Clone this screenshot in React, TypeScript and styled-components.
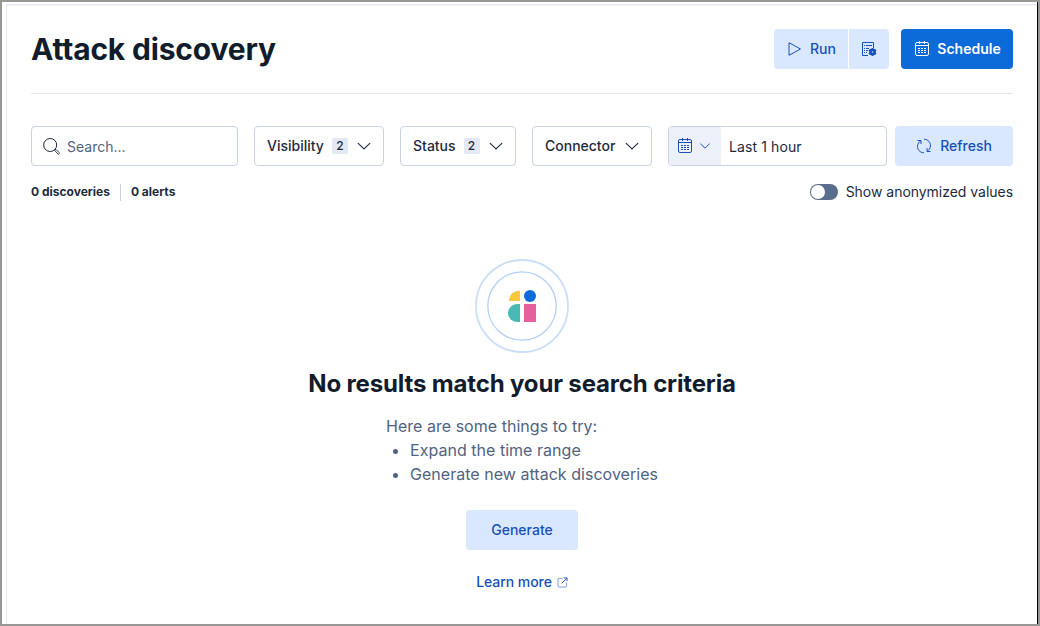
import React from 'react';
import styled, { createGlobalStyle, css } from 'styled-components';

const GlobalStyle = createGlobalStyle`
  * { box-sizing: border-box; }
  body { margin: 0; font-family: Inter, 'Liberation Sans', sans-serif; color: #1d2a3e; background: #fff; }
  button { font-family: inherit; cursor: pointer; }
  svg { display: block; flex: none; }
`;

const Frame = styled.div`
  width: 1040px;
  height: 626px;
  padding: 2px 0 0 4px;
  border: 2px solid #999795;
  background: #fff;
  box-shadow: inset -1px 0 0 #000;
  overflow: hidden;
`;

const Page = styled.main`
  height: 100%;
  margin-right: 1px;
  padding: 24px 24px 0;
  border-top: 1px solid #e3e8f2;
  border-left: 1px solid #e3e8f2;
  box-shadow: inset 0 1px 1px #f3f5fa;
`;

const Header = styled.header`
  display: flex;
  align-items: center;
  justify-content: space-between;
  height: 65px;
  padding-bottom: 24px;
  border-bottom: 1px solid #e3e8f2;
`;

const Title = styled.h1`
  margin: 0;
  font-size: 30px;
  line-height: 40px;
  font-weight: 700;
  letter-spacing: -0.17px;
  color: #111c2c;
`;

const Actions = styled.div`
  display: flex;
  gap: 12px;
`;

const SplitButton = styled.div`
  display: flex;
  gap: 1px;
  border-radius: 4px;
  overflow: hidden;
`;

const Button = styled.button<{ $width: number; $primary?: boolean; $square?: boolean }>`
  display: flex;
  align-items: center;
  justify-content: center;
  gap: 8px;
  width: ${p => p.$width}px;
  height: 40px;
  padding: 0;
  border: 0;
  border-radius: ${p => (p.$square ? 0 : 4)}px;
  font-size: 14px;
  font-weight: 500;
  color: ${p => (p.$primary ? '#fff' : '#1750ba')};
  background: ${p => (p.$primary ? '#0c6ad9' : '#d9e8ff')};
  ${p => p.$primary && css`
    gap: 7px;
    padding-left: 1px;
    font-weight: 600;
  `}
`;

const ButtonText = styled.span`
  padding-bottom: 2px;
`;

const Filters = styled.div`
  display: flex;
  margin-top: 32px;
`;

const field = css`
  display: flex;
  align-items: center;
  height: 40px;
  border: 1px solid #cad3e2;
  border-radius: 4px;
  background: #fff;
  font-size: 14px;
`;

const SearchField = styled.label`
  ${field}
  width: 207px;
  margin-right: 16px;
  padding: 0 0 0 11px;
  gap: 7px;
  color: #516381;
`;

const FilterButton = styled.button<{ $width: number }>`
  ${field}
  width: ${p => p.$width}px;
  margin-right: 16px;
  padding: 0 11px 0 12px;
  font-weight: 500;
  color: #1d2a3e;
`;

const Badge = styled.span`
  width: 16px;
  height: 16px;
  margin-left: 8px;
  border-radius: 2px;
  background: #e3e8f2;
  font-size: 12px;
  line-height: 16px;
  text-align: center;
`;

const ChevronSlot = styled.span`
  margin-left: auto;
`;

const DateField = styled.div`
  ${field}
  width: 219px;
  margin-right: 8px;
  overflow: hidden;
`;

const DateToggle = styled.span`
  display: flex;
  align-items: center;
  gap: 6px;
  width: 52px;
  height: 100%;
  padding-left: 8px;
  color: #1750ba;
  background: #ecf1f9;
`;

const DateText = styled.span`
  padding-left: 8px;
  letter-spacing: 0.1px;
`;

const Summary = styled.div`
  display: flex;
  align-items: center;
  justify-content: space-between;
  height: 20px;
  margin-top: 16px;
`;

const Counts = styled.div`
  display: flex;
  align-items: center;
  font-size: 12px;
  font-weight: 700;
`;

const CountText = styled.span`
  padding-bottom: 2px;
`;

const AlertCount = styled.span`
  margin-left: 10px;
  padding-left: 10px;
  border-left: 1px solid #cad3e2;
  height: 17px;
  line-height: 15px;
`;

const SwitchLabel = styled.label`
  display: flex;
  align-items: center;
  gap: 8px;
  font-size: 14px;
  letter-spacing: -0.03px;
`;

const Switch = styled.span`
  width: 28px;
  height: 16px;
  padding: 1px;
  border-radius: 8px;
  background: #5a6d8c;
  &::after {
    content: '';
    display: block;
    width: 14px;
    height: 14px;
    border-radius: 50%;
    background: #fff;
  }
`;

const Empty = styled.section`
  display: flex;
  flex-direction: column;
  align-items: center;
  margin-top: 57px;
`;

const EmptyTitle = styled.h2`
  margin: 15px 0 0;
  font-size: 24px;
  line-height: 32px;
  font-weight: 700;
  letter-spacing: -0.15px;
  color: #111c2c;
`;

const Hints = styled.div`
  width: 272px;
  margin-top: 14px;
  font-size: 16px;
  line-height: 24px;
  letter-spacing: 0.03px;
  color: #516381;
  white-space: nowrap;
`;

const HintList = styled.ul`
  margin: 0;
  padding-left: 24px;
`;

const GenerateSlot = styled.div`
  margin-top: 24px;
`;

const LearnMore = styled.a`
  display: flex;
  align-items: center;
  gap: 5px;
  margin-top: 22px;
  font-size: 14px;
  line-height: 20px;
  font-weight: 500;
  letter-spacing: -0.05px;
  color: #1750ba;
`;

const iconProps = { width: 16, height: 16, viewBox: '0 0 16 16', fill: 'none', stroke: 'currentColor' };

const PlayIcon = () => (
  <svg {...iconProps}><path d="M3 1.7v12.600L14.500 8z" strokeLinejoin="round" /></svg>
);

const CalendarIcon = () => (
  <svg {...iconProps}>
    <rect x="1.5" y="1.5" width="13" height="13" rx="1.5" />
    <path d="M1.5 4.5h13M5.5 0v3M10.5 0v3" />
    <path d="M4 7.5h2M7 7.5h2M10 7.5h2M4 9.5h2M7 9.5h2M10 9.5h2M4 11.5h2M7 11.5h2M10 11.5h2" />
  </svg>
);

const ListGearIcon = () => (
  <svg {...iconProps}>
    <path d="M7 14.5H1.5v-13h11V7" />
    <path d="M3 4.5h1M5 4.5h6M3 7.5h1M5 7.5h3M3 9.5h1M5 9.5h2M3 11.5h1M5 11.5h1" />
    <circle cx="11.5" cy="11" r="2.1" strokeWidth="2.6" />
    <path d="M11.5 7v1.5M11.5 13.5V15M8 9l1.3.8M13.7 12.2l1.3.8M8 13l1.3-.8M13.7 9.8l1.3-.8" strokeWidth="1.7" />
  </svg>
);

const SearchIcon = () => (
  <svg {...iconProps} width="17" height="17" viewBox="0 0 17 17" color="#1d2a3e">
    <circle cx="7.2" cy="7" r="6.5" />
    <path d="m11.9 11.6 1.200-.1 3 3a.9.9 0 0 1-1.300 1.300l-2.900-3.100z" strokeWidth=".9" />
  </svg>
);

const ChevronIcon = ({ size = 16 }: { size?: number }) => (
  <svg {...iconProps} width={size} height={size}><path d="m2.2 5.3 5.8 5.6 5.8-5.6" strokeWidth={size < 16 ? 1.3 : 1.1} strokeLinecap="round" strokeLinejoin="round" /></svg>
);

const RefreshIcon = () => (
  <svg {...iconProps}>
    <path d="M1.5 2.500H5V6M5 2.500C.8 5.200.1 11 4.500 13.800q1.600 1 3.500 1" />
    <path d="M14.500 13.500H11V10M11 13.500c4.200-2.700 4.900-8.500.5-11.300q-1.600-1-3.500-1" />
  </svg>
);

const ExternalIcon = () => (
  <svg {...iconProps} width="11" height="11" viewBox="0 0 12 12">
    <path d="M6 1.5H2.5A1.500 1.500 0 0 0 1 3v6.500A1.500 1.500 0 0 0 2.500 11H9a1.500 1.500 0 0 0 1.500-1.500V6" opacity=".6" />
    <path d="m5 7 5.700-5.700M7.500 1H11v3.500" />
  </svg>
);

const AssistantMark = () => (
  <svg width="94" height="94" viewBox="0 0 94 94">
    <circle cx="47" cy="47" r="46" fill="none" stroke="#c9dff8" strokeWidth="1.8" />
    <circle cx="47" cy="47" r="34.2" fill="none" stroke="#b4d1f4" strokeWidth="1.3" />
    <path d="M45 31.800V42H34C34 36 38.500 31.800 45 31.800Z" fill="#fac63c" />
    <circle cx="55" cy="37" r="6" fill="#0c6ad9" />
    <path d="M45 45v18h-3a9 9 0 0 1 0-18z" fill="#48b9b5" />
    <path d="M49 45h12v18H49z" fill="#e6609b" />
  </svg>
);

export default function App() {
  return (
    <>
      <GlobalStyle />
      <Frame>
        <Page>
          <Header>
            <Title>Attack discovery</Title>
            <Actions>
              <SplitButton>
                <Button $width={74} $square><PlayIcon /><ButtonText>Run</ButtonText></Button>
                <Button $width={40} $square aria-label="Settings"><ListGearIcon /></Button>
              </SplitButton>
              <Button $width={112} $primary><CalendarIcon /><ButtonText>Schedule</ButtonText></Button>
            </Actions>
          </Header>
          <Filters>
            <SearchField><SearchIcon />Search...</SearchField>
            <FilterButton $width={130}><ButtonText>Visibility</ButtonText><Badge>2</Badge><ChevronSlot><ChevronIcon /></ChevronSlot></FilterButton>
            <FilterButton $width={116}><ButtonText>Status</ButtonText><Badge>2</Badge><ChevronSlot><ChevronIcon /></ChevronSlot></FilterButton>
            <FilterButton $width={120}><ButtonText>Connector</ButtonText><ChevronSlot><ChevronIcon /></ChevronSlot></FilterButton>
            <DateField>
              <DateToggle><CalendarIcon /><ChevronIcon size={12} /></DateToggle>
              <DateText>Last 1 hour</DateText>
            </DateField>
            <Button $width={118}><RefreshIcon /><ButtonText>Refresh</ButtonText></Button>
          </Filters>
          <Summary>
            <Counts><CountText>0 discoveries</CountText><AlertCount>0 alerts</AlertCount></Counts>
            <SwitchLabel><Switch /><CountText>Show anonymized values</CountText></SwitchLabel>
          </Summary>
          <Empty>
            <AssistantMark />
            <EmptyTitle>No results match your search criteria</EmptyTitle>
            <Hints>
              Here are some things to try:
              <HintList>
                <li>Expand the time range</li>
                <li>Generate new attack discoveries</li>
              </HintList>
            </Hints>
            <GenerateSlot><Button $width={112}><ButtonText>Generate</ButtonText></Button></GenerateSlot>
            <LearnMore>Learn more<ExternalIcon /></LearnMore>
          </Empty>
        </Page>
      </Frame>
    </>
  );
}
